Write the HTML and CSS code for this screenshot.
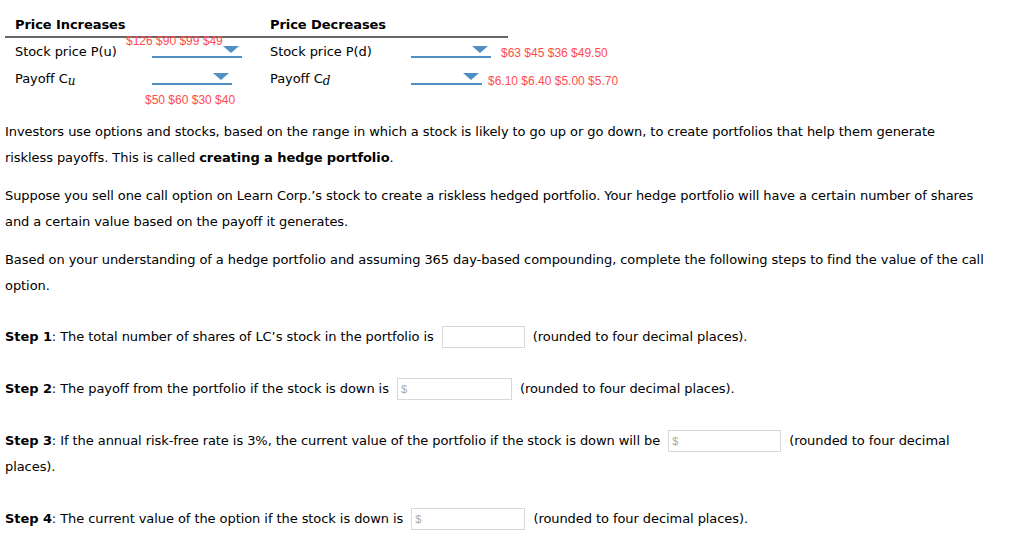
FILE: index.html
```html
<!DOCTYPE html>
<html>
<head>
<meta charset="utf-8">
<link rel="stylesheet" href="styles.css">
</head>
<body>
<div class="page">
  <div class="table">
    <div class="col col-left">
      <div class="head">Price Increases</div>
      <div class="row">
        <span class="label">Stock price P(u)</span>
        <span class="drop w90"><span class="tri"></span><span class="ans ans-above">$126 $90 $99 $49</span></span>
      </div>
      <div class="row">
        <span class="label">Payoff C<i class="sub">u</i></span>
        <span class="drop w80"><span class="tri"></span><span class="ans ans-below">$50 $60 $30 $40</span></span>
      </div>
    </div>
    <div class="col col-right">
      <div class="head">Price Decreases</div>
      <div class="row">
        <span class="label label-r">Stock price P(d)</span>
        <span class="drop w80"><span class="tri"></span></span>
        <span class="ans ans-side">$63 $45 $36 $49.50</span>
      </div>
      <div class="row">
        <span class="label label-r">Payoff C<i class="sub">d</i></span>
        <span class="drop w71"><span class="tri"></span></span>
        <span class="ans ans-side2">$6.10 $6.40 $5.00 $5.70</span>
      </div>
    </div>
  </div>

  <p class="para first">Investors use options and stocks, based on the range in which a stock is likely to go up or go down, to create portfolios that help them generate riskless payoffs. This is called <b>creating a hedge portfolio</b>.</p>
  <p class="para">Suppose you sell one call option on Learn Corp.’s stock to create a riskless hedged portfolio. Your hedge portfolio will have a certain number of shares and a certain value based on the payoff it generates.</p>
  <p class="para">Based on your understanding of a hedge portfolio and assuming 365 day-based compounding, complete the following steps to find the value of the call option.</p>

  <p class="step s1"><b>Step 1</b>: The total number of shares of LC’s stock in the portfolio is <span class="inp w83"></span> (rounded to four decimal places).</p>
  <p class="step"><b>Step 2</b>: The payoff from the portfolio if the stock is down is <span class="inp w115"><span class="dol">$</span></span> (rounded to four decimal places).</p>
  <p class="step"><b>Step 3</b>: If the annual risk-free rate is 3%, the current value of the portfolio if the stock is down will be <span class="inp w113"><span class="dol">$</span></span> (rounded to four decimal places).</p>
  <p class="step"><b>Step 4</b>: The current value of the option if the stock is down is <span class="inp w114"><span class="dol">$</span></span> (rounded to four decimal places).</p>
</div>
</body>
</html>
```

FILE: styles.css
```css
html, body {
  margin: 0;
  padding: 0;
  background: #fff;
}
body {
  font-family: "DejaVu Sans", Verdana, sans-serif;
  font-size: 13px;
  letter-spacing: -0.07px;
  color: #000;
}
.page {
  width: 980px;
  padding: 15px 0 0 5px;
}
.table {
  display: flex;
  width: 503px;
}
.col-left { width: 255px; }
.col-right { width: 248px; }
.head {
  font-weight: bold;
  height: 21px;
  line-height: 20px;
  padding-left: 10px;
  border-bottom: 2px solid #666;
}
.row {
  display: flex;
  align-items: flex-end;
  height: 27px;
  padding-left: 10px;
}
.label {
  width: 137px;
  height: 27px;
  line-height: 27px;
  flex: none;
}
.label-r { width: 141px; }
.sub {
  font-family: "DejaVu Serif", "Liberation Serif", serif;
  font-size: 12px;
  position: relative;
  top: 2px;
}
.drop {
  position: relative;
  height: 20px;
  margin-bottom: 7px;
  border-bottom: 2px solid #4f8fc4;
  flex: none;
}
.w90 { width: 90px; }
.w80 { width: 80px; }
.w71 { width: 71px; }
.tri {
  position: absolute;
  right: 3px;
  top: 10px;
  width: 0;
  height: 0;
  border-left: 8px solid transparent;
  border-right: 8px solid transparent;
  border-top: 7px solid #4f8fc4;
}
.ans {
  font-family: "Liberation Sans", Arial, sans-serif;
  font-size: 12px;
  letter-spacing: 0;
  color: #ff4d4d;
  white-space: nowrap;
  line-height: 14px;
}
.ans-above {
  position: absolute;
  left: -26px;
  top: -2px;
}
.ans-below {
  position: absolute;
  left: -7px;
  top: 30px;
}
.ans-side {
  margin-left: 10px;
  line-height: 27px;
  height: 27px;
  position: relative;
  top: 2px;
}
.ans-side2 {
  margin-left: 6px;
  line-height: 27px;
  height: 27px;
  position: relative;
  top: 3px;
}
.para {
  margin: 12px 0 0;
  line-height: 26px;
}
.para.first { margin-top: 27px; }
.step {
  margin: 0;
  line-height: 26px;
}
.step.s1 { margin-top: 25px; }
.step + .step { margin-top: 26px; }
.inp {
  display: inline-block;
  box-sizing: border-box;
  height: 22px;
  vertical-align: middle;
  border: 1px solid #d8d8d8;
  margin: 0 4px 0 4px;
  position: relative;
  top: -1px;
  line-height: 20px;
  padding-left: 3px;
}
.w83 { width: 83px; }
.w115 { width: 115px; }
.w113 { width: 113px; }
.w114 { width: 114px; }
.dol {
  font-family: "Liberation Sans", Arial, sans-serif;
  font-size: 11px;
  color: #aaa;
  vertical-align: top;
}
```
